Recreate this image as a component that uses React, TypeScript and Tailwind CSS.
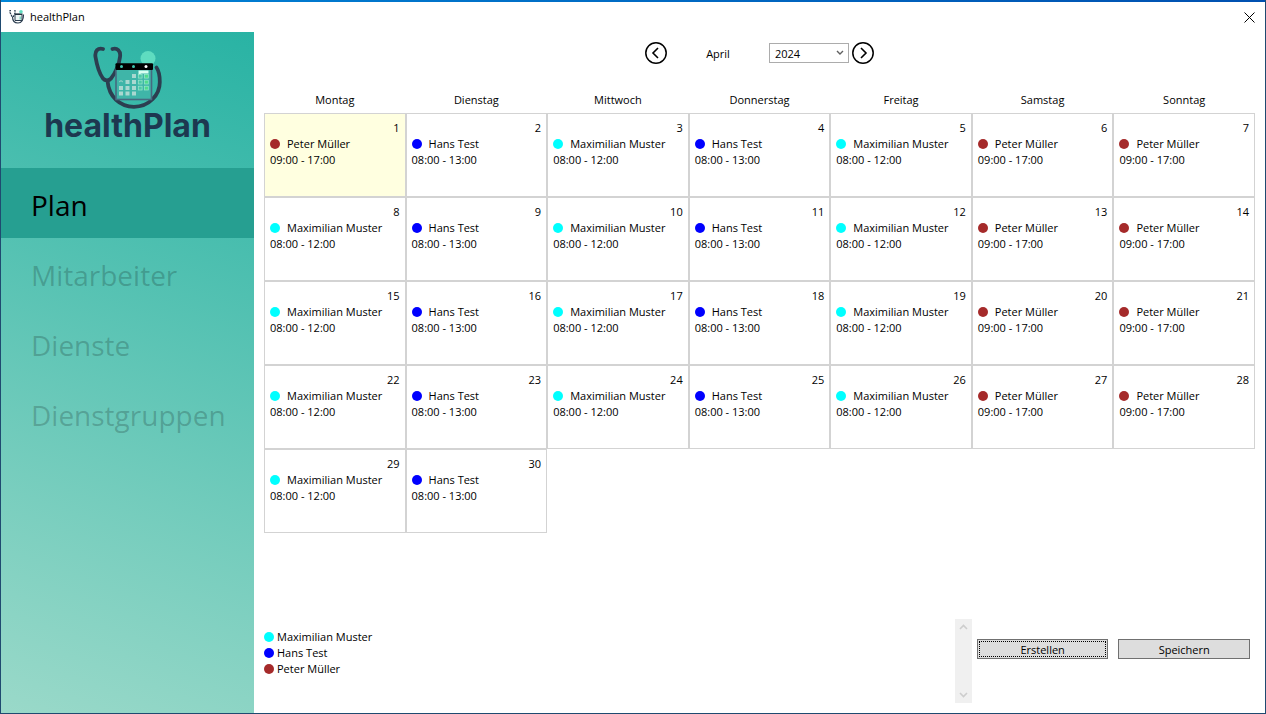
import { useState } from 'react';
import clsx from 'clsx';

interface Employee {
  name: string;
  hours: string;
  dot: string;
}

const maximilian: Employee = { name: 'Maximilian Muster', hours: '08:00 - 12:00', dot: 'bg-[#00ffff]' };
const hans: Employee = { name: 'Hans Test', hours: '08:00 - 13:00', dot: 'bg-[#0000ff]' };
const peter: Employee = { name: 'Peter Müller', hours: '09:00 - 17:00', dot: 'bg-[#a52a2a]' };

const employees = [maximilian, hans, peter];
const weekdays = ['Montag', 'Dienstag', 'Mittwoch', 'Donnerstag', 'Freitag', 'Samstag', 'Sonntag'];
const rotation = [maximilian, hans, maximilian, hans, maximilian, peter, peter];
const menu = ['Plan', 'Mitarbeiter', 'Dienste', 'Dienstgruppen'];

const DAYS_IN_MONTH = 30;

// April 2024 starts on a Monday, so no leading blanks are needed
const weeks = Array.from({ length: Math.ceil(DAYS_IN_MONTH / 7) }, (_, week) =>
  weekdays.map((_, i) => week * 7 + i + 1),
);

function shiftFor(day: number) {
  return day === 1 ? peter : rotation[(day - 1) % 7];
}

function Dot({ color }: { color: string }) {
  return <span className={clsx('size-[10px] shrink-0 rounded-full', color)} />;
}

function LogoMark({ className }: { className?: string }) {
  return (
    <svg viewBox="0 0 70 64" className={className} aria-hidden="true">
      <circle cx="55" cy="12.500" r="7.500" fill="#5fdcc0" />
      <g fill="none" stroke="#2c3e50" strokeWidth="3.800" strokeLinecap="round" strokeLinejoin="round">
        <path d="M10 3C5 1.500 1.500 5 2.500 11C4 20 6 27 10 32.500C12 35 16 35 18 32.500C23 26 26 19 27 11C28 5 24 1.500 19.500 3" />
        <path d="M14.500 35C16 51 27 60.800 41 60.800C56 60.800 66.800 49 66.800 36C66.800 30 66 25 63.500 21.500" />
      </g>
      <rect x="23" y="23" width="35.500" height="30.500" fill="#3fb5a8" stroke="#466a80" strokeWidth="1.600" />
      <rect x="22.500" y="17.200" width="37.500" height="6.800" rx="1" fill="#000" />
      <circle cx="28.500" cy="20.500" r="1.500" fill="#3fc5b0" />
      <circle cx="40.500" cy="20.500" r="1.500" fill="#3fc5b0" />
      <circle cx="53" cy="20.500" r="1.500" fill="#fff" />
      <path d="M45.500 24.500h10v3h-7q-1.500 0-3 2z" fill="#d8fff2" />
      <g fill="#a9d8d0">
        <path d="M39 28h4v4h-4zM32.500 34h4v4h-4zM39 34h4v4h-4zM26 40h4v4h-4zM32.500 40h4v4h-4zM39 40h4v4h-4zM26 45.500h4v4h-4zM32.500 45.500h4v4h-4zM39 45.500h4v4h-4z" />
        <path d="M26 35.500q2-2.500 4 0v1q-2-2-4 0z" opacity=".8" />
      </g>
      <g fill="#4cc9a6" stroke="#9be8cf" strokeWidth=".7">
        <rect x="45.300" y="28.300" width="3.800" height="3.800" />
        <rect x="51.500" y="28.300" width="3.800" height="3.800" fill="#4fdc8c" />
        <rect x="45.300" y="34.200" width="3.800" height="3.800" />
        <rect x="51.500" y="34.200" width="3.800" height="3.800" fill="#4fdc8c" />
        <rect x="45.300" y="40.200" width="3.800" height="3.800" />
        <rect x="51.500" y="40.200" width="3.800" height="3.800" fill="#4fdc8c" />
      </g>
    </svg>
  );
}

function TitleIcon() {
  return (
    <svg viewBox="0 0 16 16" className="size-4" aria-hidden="true">
      <g fill="none" stroke="#2c3e50" strokeWidth="1.200">
        <path d="M2 1.500H1v2l2 4h1.500L6 4V1.500H4.500" strokeDasharray="2 .8" />
        <path d="M3.500 7.500q0 6.500 5.500 6.500t5.500-8.500" />
        <path d="M6 5.500h7v6H6z" strokeWidth="1" fill="#eef6f6" />
      </g>
      <path d="M6 5h7.500" stroke="#1f2d3a" strokeWidth="1.200" />
      <circle cx="12" cy="2.800" r="1.800" fill="#5fdcc0" />
      <path d="M10.500 7.500h1.500v3h-1.500z" fill="#7fdcc4" />
    </svg>
  );
}

function Arrow({ label, path }: { label: string; path: string }) {
  return (
    <button type="button" aria-label={label} className="size-[22px] shrink-0">
      <svg viewBox="0 0 22 22" className="size-full" fill="none" stroke="#000">
        <circle cx="11" cy="11" r="10.200" strokeWidth="1.500" />
        <path d={path} strokeWidth="1.600" />
      </svg>
    </button>
  );
}

function ScrollArrow({ path }: { path: string }) {
  return (
    <svg viewBox="0 0 17 17" className="size-[17px]" fill="none" stroke="#cdcdcd" strokeWidth="1.600">
      <path d={path} />
    </svg>
  );
}

export default function App() {
  const [active, setActive] = useState('Plan');
  const [year, setYear] = useState('2024');

  return (
    <div className="flex min-h-screen flex-col border border-t-0 border-[#1f4a70] bg-white font-['Open_Sans','Noto_Sans',sans-serif] text-[11px] leading-4 text-black">
      <div className="h-[2px] bg-linear-to-r from-[#0086d8] to-[#0050b0]" />

      <header className="flex h-[30px] items-center justify-between pr-[10px] pl-2">
        <div className="flex items-center gap-[5px]">
          <TitleIcon />
          <h1>healthPlan</h1>
        </div>
        <button type="button" aria-label="Schließen">
          <svg viewBox="0 0 11 11" className="size-[11px]" fill="none" stroke="#000">
            <path d="M.5.5l10 10M10.500.5l-10 10" />
          </svg>
        </button>
      </header>

      <div className="flex flex-1">
        {/* Sidebar */}
        <aside className="w-[253px] shrink-0 bg-linear-[200deg] from-[#29b3a4] to-[#9ad9c9]">
          <div className="flex h-[136px] flex-col items-center pt-[14px]">
            <LogoMark className="h-16 w-[70px]" />
            <p className="font-['Inter',sans-serif] text-[32px] leading-8 font-bold text-[#1d3850]">healthPlan</p>
          </div>
          <nav>
            {menu.map((item) => (
              <a
                key={item}
                href="#"
                onClick={() => setActive(item)}
                className={clsx(
                  'flex h-[70px] items-center pt-1 pl-[30px] text-[28px]',
                  item === active ? 'bg-[#269f91] text-black' : 'text-black/20',
                )}
              >
                {item}
              </a>
            ))}
          </nav>
        </aside>

        <main className="flex min-w-0 flex-1 flex-col p-[10px]">
          {/* Month selection */}
          <div className="flex items-center justify-center">
            <Arrow label="Vorheriger Monat" path="M13 6L8 11l5 5" />
            <span className="w-[102px] pt-px text-center">April</span>
            <div className="relative mr-[3px]">
              <select
                aria-label="Jahr"
                value={year}
                onChange={(e) => setYear(e.target.value)}
                className="block h-5 w-20 appearance-none border border-[#acacac] bg-white pt-px pl-[5px]"
              >
                <option>2023</option>
                <option>2024</option>
                <option>2025</option>
              </select>
              <svg
                viewBox="0 0 8 6"
                className="pointer-events-none absolute top-[7px] right-[5px] h-[6px] w-2"
                fill="none"
                stroke="#606060"
                strokeWidth="1.400"
              >
                <path d="M1 1l3 3 3-3" />
              </svg>
            </div>
            <Arrow label="Nächster Monat" path="M9 6l5 5-5 5" />
          </div>

          {/* Calendar */}
          <table className="mt-[26px] w-full table-fixed border-separate border-spacing-0">
            <thead>
              <tr>
                {weekdays.map((day) => (
                  <th key={day} className="h-[23px] pb-1 text-center font-normal">
                    {day}
                  </th>
                ))}
              </tr>
            </thead>
            <tbody>
              {weeks.map((week) => (
                <tr key={week[0]}>
                  {week.map((day) => {
                    if (day > DAYS_IN_MONTH) return <td key={day} />;
                    const shift = shiftFor(day);
                    return (
                      <td
                        key={day}
                        className={clsx(
                          'h-[84px] border border-[#d3d3d3] px-[5px] pt-[6px] align-top',
                          day === 1 && 'bg-[#ffffe0]',
                        )}
                      >
                        <div className="text-right">{day}</div>
                        <div className="flex items-center gap-[7px] whitespace-nowrap">
                          <Dot color={shift.dot} />
                          {shift.name}
                        </div>
                        <div>{shift.hours}</div>
                      </td>
                    );
                  })}
                </tr>
              ))}
            </tbody>
          </table>

          {/* Legend and actions */}
          <footer className="mt-auto grid h-[84px] grid-cols-7">
            <div className="col-span-5 flex justify-between">
              <ul className="pt-[10px]">
                {employees.map((employee) => (
                  <li key={employee.name} className="flex items-center gap-[3px]">
                    <Dot color={employee.dot} />
                    {employee.name}
                  </li>
                ))}
              </ul>
              <div className="flex w-[17px] flex-col justify-between bg-[#f0f0f0]">
                <ScrollArrow path="M5 10l3.500-3.500L12 10" />
                <ScrollArrow path="M5 7l3.500 3.500L12 7" />
              </div>
            </div>
            <button type="button" className="mx-[5px] mt-5 h-5 border border-[#707070] bg-[#dddddd] p-px">
              <span className="flex h-full items-center justify-center border border-dotted border-black pt-px">
                Erstellen
              </span>
            </button>
            <button type="button" className="mx-[5px] mt-5 h-5 border border-[#707070] bg-[#dddddd] pt-px">
              Speichern
            </button>
          </footer>
        </main>
      </div>
    </div>
  );
}
